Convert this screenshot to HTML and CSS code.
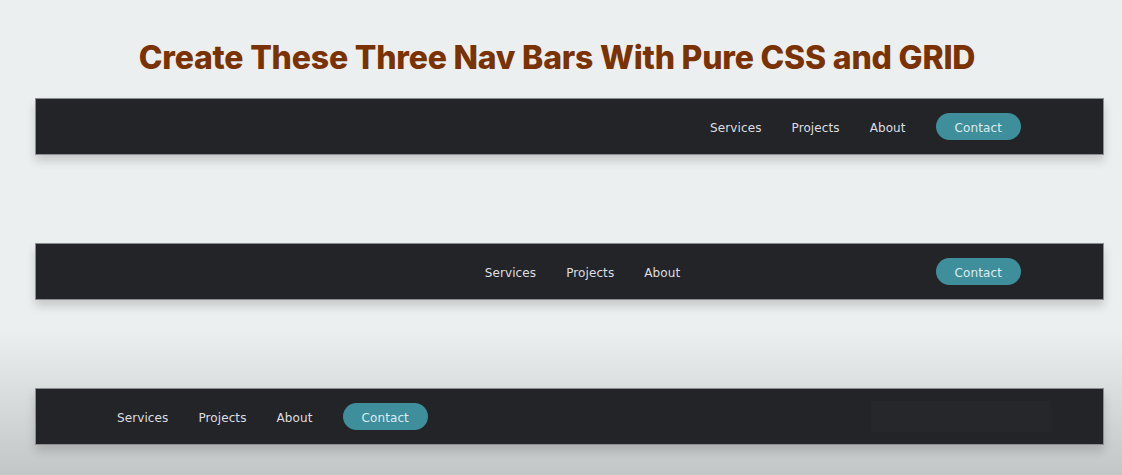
FILE: index.html
```html
<!DOCTYPE html>
<html lang="en">
<head>
<meta charset="utf-8">
<title>Three Nav Bars</title>
<link rel="stylesheet" href="styles.css">
</head>
<body>
<h1 class="title">Create These Three Nav Bars With Pure CSS and GRID</h1>
<main class="stack">
  <nav class="bar bar-one">
    <ul class="links">
      <li><a href="#">Services</a></li>
      <li><a href="#">Projects</a></li>
      <li><a href="#">About</a></li>
      <li><a class="pill" href="#">Contact</a></li>
    </ul>
  </nav>
  <nav class="bar bar-two">
    <span class="spacer"></span>
    <ul class="links">
      <li><a href="#">Services</a></li>
      <li><a href="#">Projects</a></li>
      <li><a href="#">About</a></li>
    </ul>
    <a class="pill pill-end" href="#">Contact</a>
  </nav>
  <nav class="bar bar-three">
    <ul class="links">
      <li><a href="#">Services</a></li>
      <li><a href="#">Projects</a></li>
      <li><a href="#">About</a></li>
      <li><a class="pill" href="#">Contact</a></li>
    </ul>
    <span class="spacer"></span>
    <span class="ghost"></span>
  </nav>
</main>
</body>
</html>
```
FILE: styles.css
```css
* { box-sizing: border-box; }
html, body { margin: 0; padding: 0; }
body {
  width: 1122px;
  height: 475px;
  overflow: hidden;
  background: linear-gradient(to bottom, #eceff0 0, #eceff0 330px, #c3c6c7 475px);
  font-family: "DejaVu Sans", "Liberation Sans", sans-serif;
}
.title {
  margin: 0;
  padding-top: 38px;
  height: 98px;
  text-align: center;
  font-family: Inter, "Liberation Sans", sans-serif;
  font-weight: 800;
  font-size: 32px;
  line-height: 40px;
  color: #7a3300;
  letter-spacing: -0.2px;
  padding-right: 8px;
}
.stack {
  display: flex;
  flex-direction: column;
  gap: 88px;
  padding: 0 18px 0 35px;
}
.bar {
  height: 57px;
  background: #232428;
  border: 1px solid #8b8d90;
  box-shadow: 0 6px 9px rgba(0, 0, 0, 0.16);
  display: grid;
  align-items: center;
}
.links {
  list-style: none;
  margin: 0;
  padding: 0;
  display: flex;
  align-items: center;
  gap: 30px;
}
.links a, .pill {
  color: #dedfe0;
  text-decoration: none;
  font-size: 12px;
  letter-spacing: 0.1px;
}
.pill {
  display: inline-flex;
  align-items: center;
  background: #3f8e9c;
  color: #dcecef;
  padding: 2px 19px 0;
  height: 27px;
  border-radius: 14px;
}
.links a.pill { color: #dcecef; }
.bar-one {
  justify-content: end;
  padding-right: 82px;
}
.bar-two {
  grid-template-columns: 1fr auto 1fr;
  padding: 0 82px 0 108px;
}
.pill-end { justify-self: end; }
.bar-three {
  grid-template-columns: auto 1fr 180px;
  padding: 0 52px 0 81px;
}
.ghost {
  height: 31px;
  background: #26272b;
}
```
